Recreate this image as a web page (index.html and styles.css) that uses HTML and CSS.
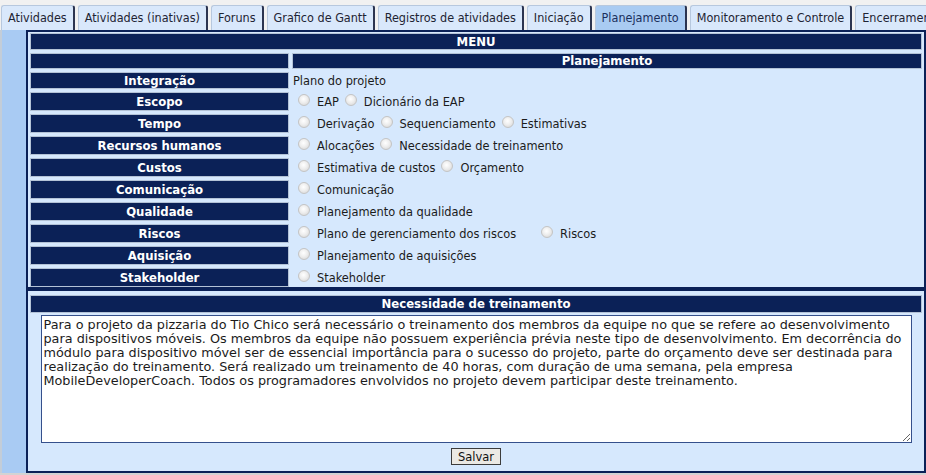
FILE: index.html
```html
<!DOCTYPE html>
<html lang="pt-BR">
<head>
<meta charset="utf-8">
<title>Planejamento</title>
<link rel="stylesheet" href="styles.css">
</head>
<body>
<nav class="tabs">
  <a class="tab">Atividades</a>
  <a class="tab">Atividades (inativas)</a>
  <a class="tab">Foruns</a>
  <a class="tab">Grafico de Gantt</a>
  <a class="tab">Registros de atividades</a>
  <a class="tab">Iniciação</a>
  <a class="tab active">Planejamento</a>
  <a class="tab">Monitoramento e Controle</a>
  <a class="tab">Encerramento</a>
</nav>
<div class="layout">
  <div class="side"></div>
  <main class="main">
    <section class="box menu">
      <div class="bar span">MENU</div>
      <div class="bar"></div>
      <div class="bar">Planejamento</div>

      <div class="bar label">Integração</div>
      <div class="opts">Plano do projeto</div>

      <div class="bar label row">Escopo</div>
      <div class="opts row"><label><input type="radio" name="o">EAP</label><label><input type="radio" name="o">Dicionário da EAP</label></div>

      <div class="bar label row">Tempo</div>
      <div class="opts row"><label><input type="radio" name="o">Derivação</label><label><input type="radio" name="o">Sequenciamento</label><label><input type="radio" name="o">Estimativas</label></div>

      <div class="bar label row">Recursos humanos</div>
      <div class="opts row"><label><input type="radio" name="o">Alocações</label><label><input type="radio" name="o">Necessidade de treinamento</label></div>

      <div class="bar label row">Custos</div>
      <div class="opts row"><label><input type="radio" name="o">Estimativa de custos</label><label><input type="radio" name="o">Orçamento</label></div>

      <div class="bar label row">Comunicação</div>
      <div class="opts row"><label><input type="radio" name="o">Comunicação</label></div>

      <div class="bar label row">Qualidade</div>
      <div class="opts row"><label><input type="radio" name="o">Planejamento da qualidade</label></div>

      <div class="bar label row">Riscos</div>
      <div class="opts row"><label><input type="radio" name="o">Plano de gerenciamento dos riscos</label><label class="wide"><input type="radio" name="o">Riscos</label></div>

      <div class="bar label row">Aquisição</div>
      <div class="opts row"><label><input type="radio" name="o">Planejamento de aquisições</label></div>

      <div class="bar label row">Stakeholder</div>
      <div class="opts row"><label><input type="radio" name="o">Stakeholder</label></div>
    </section>
    <section class="box editor">
      <div class="bar">Necessidade de treinamento</div>
      <textarea class="text">Para o projeto da pizzaria do Tio Chico será necessário o treinamento dos membros da equipe no que se refere ao desenvolvimento para dispositivos móveis. Os membros da equipe não possuem experiência prévia neste tipo de desenvolvimento. Em decorrência do módulo para dispositivo móvel ser de essencial importância para o sucesso do projeto, parte do orçamento deve ser destinada para realização do treinamento. Será realizado um treinamento de 40 horas, com duração de uma semana, pela empresa MobileDeveloperCoach. Todos os programadores envolvidos no projeto devem participar deste treinamento.</textarea>
      <button class="save" type="button">Salvar</button>
    </section>
  </main>
</div>
</body>
</html>
```
FILE: styles.css
```css
* { box-sizing: border-box; }
html, body { margin: 0; padding: 0; }
body {
  background: #d3d3d3;
  font-family: "DejaVu Sans", Verdana, sans-serif;
  height: 475px;
  overflow: hidden;
}
.tabs {
  display: flex;
  align-items: flex-end;
  gap: 3px;
  height: 30px;
  padding-left: 1px;
  background: #f1f1f1;
  white-space: nowrap;
  overflow: hidden;
}
.tab {
  flex: none;
  height: 25px;
  padding: 0 6px;
  line-height: 23px;
  font-family: "DejaVu Sans Condensed", "DejaVu Sans", sans-serif;
  font-size: 12.5px;
  color: #1e2433;
  background: #d9e8fb;
  border: 1px solid #b7c8de;
  border-right: 2px solid #2b3450;
  border-bottom: none;
  border-radius: 3px 3px 0 0;
}
.tab.active {
  background: #a9cbf2;
  color: #1a2f5c;
}
.layout {
  display: flex;
  height: 443px;
}
.side {
  width: 26px;
  flex: none;
  background: #a9cbf3;
  border-left: 2px solid #c3cdd8;
}
.main {
  flex: 1;
  display: flex;
  flex-direction: column;
}
.box {
  border: 2px solid #0b2157;
  background: #d6e8fd;
}
.menu {
  display: grid;
  grid-template-columns: 259px 1fr;
  grid-template-rows: 17px 16px 17px repeat(9, 19px);
  gap: 3px 3px;
  padding: 1px 2px 0 2px;
}
.bar {
  background: #0b2157;
  border: 1px solid #b3c2d6;
  color: #fff;
  font-weight: bold;
  font-size: 11.7px;
  text-align: center;
  display: flex;
  align-items: center;
  justify-content: center;
}
.span { grid-column: 1 / -1; }
.opts {
  display: flex;
  align-items: center;
  font-size: 11.4px;
  color: #1b1b1b;
  padding-left: 1px;
}
.opts.row { padding-left: 6px; }
.opts label {
  display: flex;
  align-items: center;
  margin-right: 6px;
}
.opts label.wide { margin-left: 19px; }
.opts input {
  appearance: none;
  -webkit-appearance: none;
  width: 12px;
  height: 12px;
  margin: -4px 7px 0 0;
  border-radius: 50%;
  border: 1px solid #c4c4c4;
  background: radial-gradient(circle at 45% 40%, #ffffff 0, #eeeeee 45%, #d2d2d2 100%);
}
.editor {
  flex: 1;
  display: flex;
  flex-direction: column;
  align-items: center;
  padding: 4px 2px 4px;
  border-top-width: 2px;
}
.editor .bar {
  align-self: stretch;
  height: 18px;
  flex: none;
}
.text {
  margin-top: 2px;
  width: 871px;
  height: 128px;
  flex: none;
  border: 1px solid #35508c;
  background: #fff;
  color: #1b1b1b;
  font-family: "DejaVu Sans", Verdana, sans-serif;
  font-size: 12.8px;
  line-height: 14px;
  padding: 2px 2px;
  resize: both;
  overflow: hidden;
}
.save {
  margin-top: 5px;
  height: 17px;
  width: 50px;
  padding: 0;
  font-family: "DejaVu Sans", Verdana, sans-serif;
  font-size: 11.5px;
  color: #111;
  background: #ebe9e4;
  border: 1px solid #3c3c3c;
  border-radius: 0;
}
```
